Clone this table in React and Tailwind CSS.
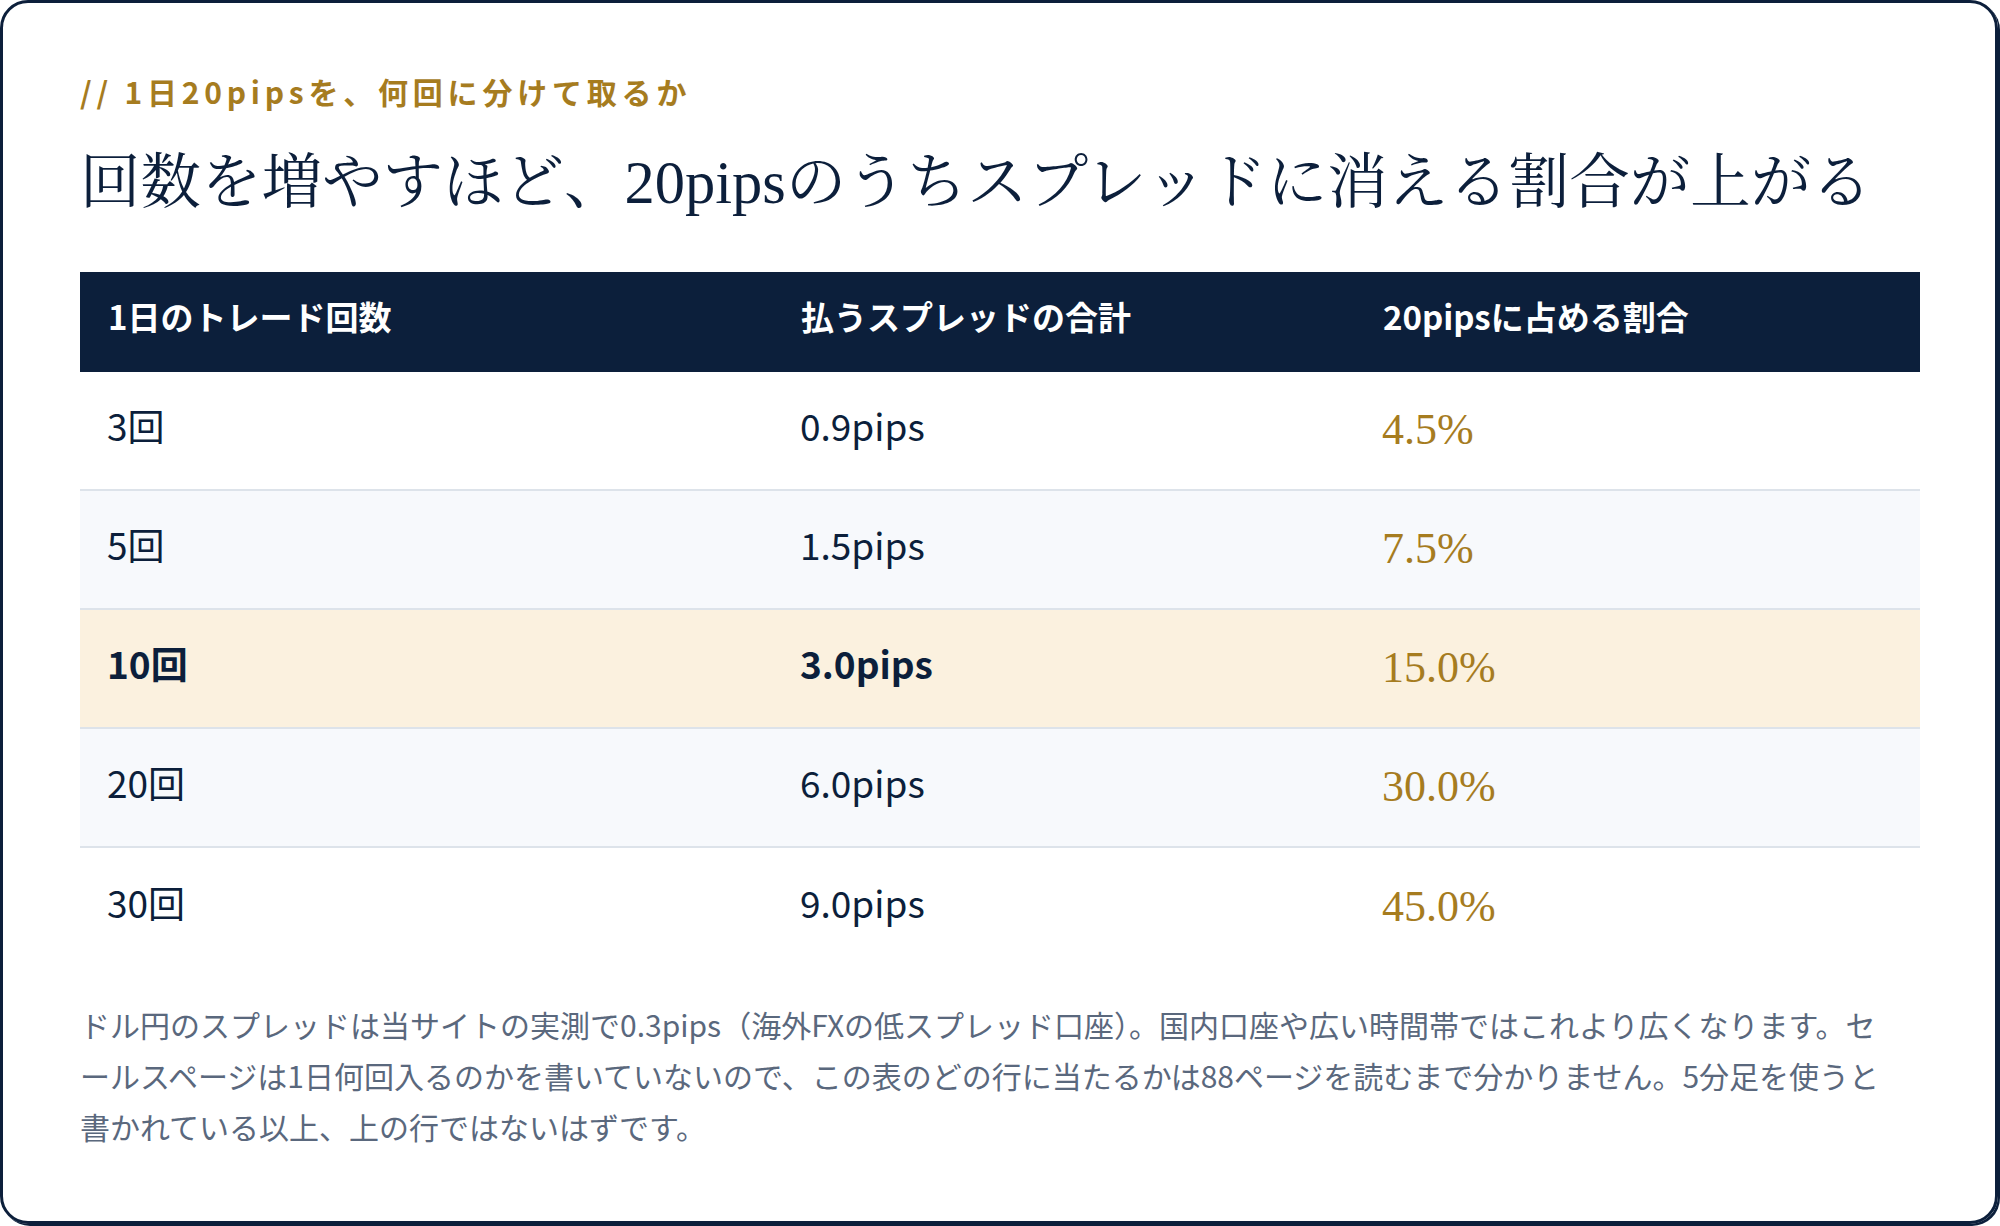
import React from 'react'

const rows = [
  { count: "3回", spread: "0.9pips", ratio: "4.5%", bg: "bg-white" },
  { count: "5回", spread: "1.5pips", ratio: "7.5%", bg: "bg-[#f7f9fc]" },
  { count: "10回", spread: "3.0pips", ratio: "15.0%", bg: "bg-[#fbf1df]", hot: true },
  { count: "20回", spread: "6.0pips", ratio: "30.0%", bg: "bg-[#f7f9fc]" },
  { count: "30回", spread: "9.0pips", ratio: "45.0%", bg: "bg-white", last: true },
]

const App = () => {
  return (
    <div className="w-[2000px] h-[1226px] bg-white font-['Noto_Sans_CJK_JP','Noto_Sans',sans-serif]">
      <div className="w-[1998px] h-[1224px] border-[3px] border-[#0c1f3b] rounded-[28px] shadow-[2px_2px_0_#0c1f3b] px-[77px] pt-[67px]">
        {/* kicker */}
        <p className="text-[30px] leading-[42px] font-bold tracking-[0.16em] text-[#a67c1f]">
          // 1日20pipsを、何回に分けて取るか
        </p>
        <h2 className="mt-[29px] text-[60.5px] leading-[84px] text-[#0c1f3b] font-['Liberation_Serif','Noto_Serif_CJK_JP',serif]">
          回数を増やすほど、20pipsのうちスプレッドに消える割合が上がる
        </h2>

        {/* table */}
        <div className="mt-[47px] w-[1840px]">
          <div className="grid grid-cols-[693px_582px_1fr] h-[100px] pb-[10px] items-center bg-[#0c1f3b] text-white text-[33px] font-bold">
            <div className="px-[28px]">1日のトレード回数</div>
            <div className="px-[28px]">払うスプレッドの合計</div>
            <div className="px-[28px]">20pipsに占める割合</div>
          </div>
          {rows.map((r) => (
            <div
              key={r.count}
              className={`grid grid-cols-[693px_582px_1fr] h-[119px] pb-[10px] items-center text-[37px] text-[#0c1f3b] ${r.bg} ${r.last ? "" : "border-b-2 border-[#dde3ea]"} ${r.hot ? "font-bold" : ""}`}
            >
              <div className="px-[27px]">{r.count}</div>
              <div className="px-[27px]">{r.spread}</div>
              <div className="px-[27px] pt-[8px] text-[44px] font-normal text-[#a67c1f] font-['Liberation_Serif','Noto_Serif_CJK_JP',serif]">
                {r.ratio}
              </div>
            </div>
          ))}
        </div>

        <p className="mt-[32px] w-[1860px] text-[30px] leading-[51px] text-[#5a687d]">
          ドル円のスプレッドは当サイトの実測で0.3pips（海外FXの低スプレッド口座）。国内口座や広い時間帯ではこれより広くなります。セ
          <br />
          ールスページは1日何回入るのかを書いていないので、この表のどの行に当たるかは88ページを読むまで分かりません。5分足を使うと
          <br />
          書かれている以上、上の行ではないはずです。
        </p>
      </div>
    </div>
  )
}

export default App
